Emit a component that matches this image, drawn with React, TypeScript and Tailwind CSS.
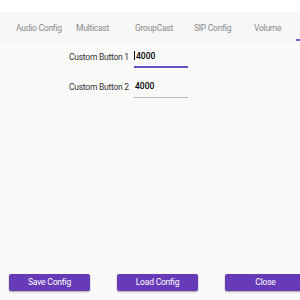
import React from 'react';

const tabs = ['Audio Config', 'Multicast', 'GroupCast', 'SIP Config', 'Volume'];

export default function App() {
  return (
    <div
      className="w-[300px] h-[300px] overflow-hidden bg-[#fafafa] flex flex-col relative"
      style={{ fontFamily: 'Roboto, "Liberation Sans", sans-serif' }}
    >
      {/* top strip */}
      <div className="h-[12px] bg-white shrink-0" />

      {/* tab bar */}
      <div className="h-[32px] bg-[#f7f7f7] shrink-0 flex items-center text-[8.5px] tracking-[-0.25px] text-[#8a8a8a] relative">
        <div className="flex items-center whitespace-nowrap pl-[16px]">
          <span className="w-[60px]">{tabs[0]}</span>
          <span className="w-[59px]">{tabs[1]}</span>
          <span className="w-[59px]">{tabs[2]}</span>
          <span className="w-[60px]">{tabs[3]}</span>
          <span className="w-[40px]">{tabs[4]}</span>
        </div>
        <div className="absolute left-[296px] top-[27px] w-[10px] h-[2px] bg-[#7a5cc6]" />
      </div>

      {/* fields */}
      <div className="flex flex-col gap-[11px] pt-[5px] pl-[69px]">
        <div className="flex items-end gap-[7px]">
          <span className="text-[8.5px] tracking-[-0.25px] text-[#333] pb-[4px] w-[58px] whitespace-nowrap">Custom Button 1</span>
          <div className="w-[54px] h-[19px] border-b-2 border-[#6a4fc2] flex items-start pt-[1px] text-[8.5px] text-black font-medium">
            <span className="w-px h-[9px] bg-black mr-px mt-[1px]" />
            4000
          </div>
        </div>
        <div className="flex items-end gap-[7px]">
          <span className="text-[8.5px] tracking-[-0.25px] text-[#333] pb-[4px] w-[58px] whitespace-nowrap">Custom Button 2</span>
          <div className="w-[54px] h-[19px] border-b border-[#b5b5b5] flex items-start pt-[1px] pl-[1px] text-[8.5px] text-black font-medium">
            4000
          </div>
        </div>
      </div>

      <div className="flex-1" />

      {/* buttons */}
      <div className="flex gap-[27px] pl-[9px] pb-[9px] whitespace-nowrap">
        {['Save Config', 'Load Config', 'Close'].map((b) => (
          <button
            key={b}
            className="w-[81px] h-[17px] shrink-0 rounded-[2px] bg-[#673ab7] text-white text-[8.5px] tracking-[-0.2px] shadow-[0_1px_2px_rgba(0,0,0,0.35)] flex items-center justify-center"
          >
            {b}
          </button>
        ))}
      </div>
    </div>
  );
}
